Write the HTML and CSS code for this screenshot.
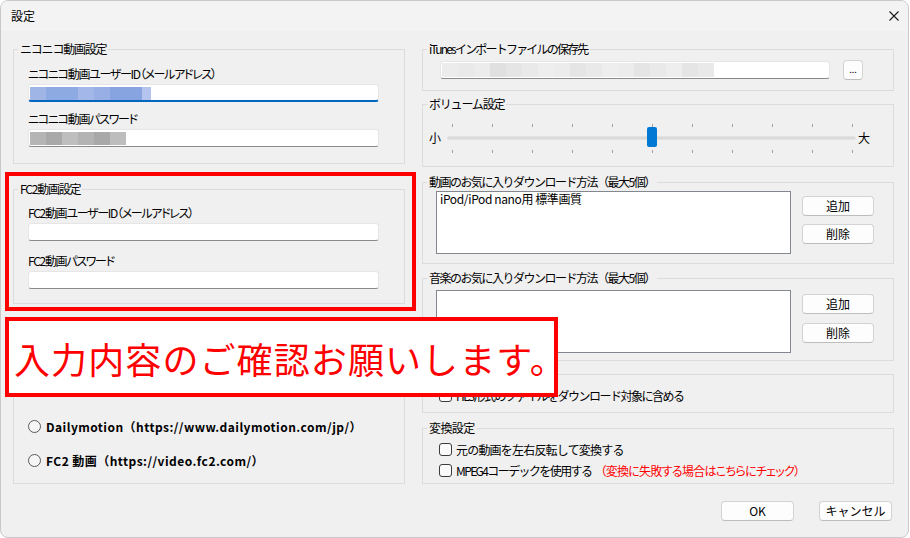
FILE: index.html
```html
<!DOCTYPE html>
<html lang="ja">
<head>
<meta charset="utf-8">
<title>設定</title>
<link rel="stylesheet" href="styles.css">
</head>
<body>
<div class="window">
  <div class="titlebar">
    <span class="title">設定</span>
    <svg class="close" viewBox="0 0 10 10" width="10" height="10"><path d="M0.5 0.5 L9.5 9.5 M9.5 0.5 L0.5 9.5" stroke="#1a1a1a" stroke-width="1.1" fill="none"/></svg>
  </div>
  <div class="content">
    <div class="columns">
      <div class="col">
        <fieldset class="group g-nico">
          <legend>ニコニコ動画設定</legend>
          <div class="gbody">
            <div class="label">ニコニコ動画ユーザーID（メールアドレス）</div>
            <div class="input focused">
              <span class="blur b-blue"><i class="w16 c1"></i><i class="w32 c2"></i><i class="w16 c3"></i><i class="w16 c4"></i><i class="w32 c5"></i><i class="w9 c6"></i></span>
            </div>
            <div class="label">ニコニコ動画パスワード</div>
            <div class="input">
              <span class="blur b-gray"><i class="w16 g1"></i><i class="w16 g2"></i><i class="w16 g3"></i><i class="w16 g4"></i><i class="w16 g5"></i><i class="w16 g6"></i></span>
            </div>
          </div>
        </fieldset>
        <div class="redframe">
          <fieldset class="group g-fc2">
            <legend>FC2動画設定</legend>
            <div class="gbody">
              <div class="label l-first">FC2動画ユーザーID（メールアドレス）</div>
              <div class="input"></div>
              <div class="label l-second">FC2動画パスワード</div>
              <div class="input"></div>
            </div>
          </fieldset>
        </div>
        <div class="box g-site">
          <div class="radio"><span class="circle"></span><span class="rtext">Dailymotion（https://www.dailymotion.com/jp/）</span></div>
          <div class="radio r2"><span class="circle"></span><span class="rtext">FC2 動画（https://video.fc2.com/）</span></div>
        </div>
      </div>

      <div class="col">
        <fieldset class="group wide g-itunes">
          <legend>iTunesインポートファイルの保存先</legend>
          <div class="pathrow">
            <div class="input path">
              <span class="blur b-path"><i class="w16 p1"></i><i class="w16 p2"></i><i class="w16 p1"></i><i class="w16 p3"></i><i class="w16 p4"></i><i class="w16 p2"></i><i class="w16 p5"></i><i class="w16 p1"></i><i class="w16 p4"></i><i class="w16 p2"></i><i class="w16 p5"></i><i class="w16 p1"></i><i class="w16 p4"></i><i class="w16 p2"></i><i class="w16 p5"></i><i class="w16 p4"></i><i class="w16 p2"></i></span>
            </div>
            <div class="btn small">...</div>
          </div>
        </fieldset>

        <fieldset class="group wide g-vol">
          <legend>ボリューム設定</legend>
          <div class="sliderrow">
            <span class="slabel">小</span>
            <div class="slider">
              <div class="ticks"><i></i><i></i><i></i><i></i><i></i><i></i><i></i><i></i><i></i><i></i><i></i></div>
              <div class="track"></div>
              <div class="ticks bottom"><i></i><i></i><i></i><i></i><i></i><i></i><i></i><i></i><i></i><i></i><i></i></div>
              <div class="thumb"></div>
            </div>
            <span class="slabel big">大</span>
          </div>
        </fieldset>

        <fieldset class="group wide g-vfav">
          <legend>動画のお気に入りダウンロード方法（最大5個）</legend>
          <div class="listrow">
            <div class="listbox"><div class="item">iPod/iPod nano用 標準画質</div></div>
            <div class="btncol">
              <div class="btn">追加</div>
              <div class="btn">削除</div>
            </div>
          </div>
        </fieldset>

        <fieldset class="group wide g-mfav">
          <legend>音楽のお気に入りダウンロード方法（最大5個）</legend>
          <div class="listrow">
            <div class="listbox"></div>
            <div class="btncol m">
              <div class="btn">追加</div>
              <div class="btn">削除</div>
            </div>
          </div>
        </fieldset>

        <div class="box wide g-dl">
          <div class="check"><span class="cbox"></span><span class="dltext">HLS形式のファイルをダウンロード対象に含める</span></div>
        </div>

        <fieldset class="group wide g-conv">
          <legend>変換設定</legend>
          <div class="check c-first"><span class="cbox"></span><span>元の動画を左右反転して変換する</span></div>
          <div class="check c-second"><span class="cbox"></span><span class="mpeg">MPEG4コーデックを使用する</span><span class="note">（変換に失敗する場合はこちらにチェック）</span></div>
        </fieldset>
      </div>
    </div>

    <div class="footer">
      <div class="btn ok">OK</div>
      <div class="btn ok">キャンセル</div>
    </div>
  </div>

  <div class="callout">入力内容のご確認お願いします。</div>
</div>
</body>
</html>
```

FILE: styles.css
```css
body {
  margin: 0;
  font-family: "Noto Sans CJK JP", "Noto Sans", sans-serif;
  font-size: 12px;
  color: #000;
  background: #ffffff;
}

.window {
  position: relative;
  width: 909px;
  height: 538px;
  box-sizing: border-box;
  border: 1px solid #c9c9c9;
  border-radius: 8px;
  background: #f0f0f0;
  overflow: hidden;
  letter-spacing: -1px;
}

.titlebar {
  height: 30px;
  background: #f3f3f3;
  display: flex;
  align-items: center;
  justify-content: space-between;
  padding: 0 9px 0 10px;
  letter-spacing: 0;
}

.title {
  line-height: 16px;
}

.close {
  display: block;
}

.content {
  padding: 0 14px 0 12px;
}

.columns {
  display: grid;
  grid-template-columns: 392px 472px;
  column-gap: 17px;
}

.col {
  display: flex;
  flex-direction: column;
  align-items: flex-start;
}

.group {
  margin: 0;
  padding: 0;
  border: 1px solid #dcdcdc;
  min-width: 0;
  width: 392px;
  box-sizing: border-box;
}

.box {
  border: 1px solid #dcdcdc;
  width: 392px;
  box-sizing: border-box;
}

.wide {
  width: 472px;
}

legend {
  padding: 0 2px;
  margin-left: 4px;
  line-height: 16px;
  font-size: 12px;
  letter-spacing: -1.2px;
}

.g-itunes legend {
  letter-spacing: -1.8px;
}

.g-vfav legend,
.g-mfav legend {
  letter-spacing: -1.5px;
}

.g-conv legend {
  letter-spacing: -0.6px;
}

.gbody {
  padding-left: 14px;
}

.label {
  line-height: 16px;
  margin-top: 9px;
  letter-spacing: -1.3px;
  font-feature-settings: "palt";
}

.input {
  width: 351px;
  height: 18px;
  box-sizing: border-box;
  background: #ffffff;
  border: 1px solid #e6e6e6;
  border-bottom: 1px solid #8a8a8a;
  border-radius: 3px;
  margin-top: 2px;
  padding: 2px 1px 0 1px;
}

.input.focused {
  border-bottom: 2px solid #0067c0;
}

.blur {
  display: flex;
  height: 13px;
}

.blur i {
  display: block;
  height: 100%;
}

.w16 { width: 16px; }
.w32 { width: 32px; }
.w9 { width: 9px; }

.c1 { background: #9fb5e6; }
.c2 { background: #8eaae3; }
.c3 { background: #a3b8e8; }
.c4 { background: #97afe4; }
.c5 { background: #87a4e1; }
.c6 { background: #b4c4ee; }

.g1 { background: #b5b5b5; }
.g2 { background: #a9a9a9; }
.g3 { background: #bebebe; }
.g4 { background: #b3b3b3; }
.g5 { background: #a8a8a8; }
.g6 { background: #bdbdbd; }

.p1 { background: #ececec; }
.p2 { background: #e9e9e9; }
.p3 { background: #e0e0e0; }
.p4 { background: #e5e5e5; }
.p5 { background: #eeeeee; }

.g-nico {
  margin-top: 10px;
}

.g-nico .gbody {
  padding-bottom: 16px;
}

.redframe {
  margin: 8px 0 0 -8px;
  width: 411px;
  box-sizing: border-box;
  border: 4px solid #ff0000;
  padding: 5px 0 3px 4px;
}

.g-fc2 .gbody {
  padding-bottom: 14px;
}

.g-fc2 .l-first {
  margin-top: 8px;
}

.g-fc2 .l-second {
  margin-top: 12px;
}

.g-site {
  margin-top: 11px;
  padding: 93px 0 13px 14px;
}

.radio {
  display: flex;
  align-items: center;
  height: 20px;
}

.radio.r2 {
  margin-top: 14px;
}

.circle {
  width: 13px;
  height: 13px;
  box-sizing: border-box;
  border: 1px solid #5a5a5a;
  border-radius: 50%;
  background: #f5f5f5;
  margin-right: 5px;
}

.rtext {
  font-size: 12px;
  font-weight: 600;
  letter-spacing: 0.45px;
}

/* right column */
.g-itunes {
  margin-top: 10px;
}

.pathrow {
  display: flex;
  align-items: center;
  height: 20px;
  margin-top: 3px;
  padding: 0 0 10px 17px;
}

.input.path {
  width: 390px;
  margin-top: 0;
  padding: 1px 1px 0 1px;
}

.b-path {
  height: 14px;
}

.btn {
  height: 20px;
  width: 72px;
  box-sizing: border-box;
  background: #fdfdfd;
  border: 1px solid #d3d3d3;
  border-bottom-color: #bdbdbd;
  border-radius: 4px;
  display: flex;
  align-items: center;
  justify-content: center;
  font-size: 12px;
  line-height: 16px;
  letter-spacing: 0;
}

.btn.small {
  width: 20px;
  margin-left: 13px;
  font-size: 9px;
}

.g-vol {
  margin-top: 5px;
}

.sliderrow {
  display: flex;
  align-items: center;
  margin-top: 10px;
  padding: 0 0 12px 6px;
  letter-spacing: 0;
}

.slabel {
  width: 12px;
  line-height: 16px;
}

.slabel.big {
  margin-left: 2px;
}

.slider {
  position: relative;
  width: 409px;
  height: 32px;
  margin-left: 6px;
  padding-top: 2px;
  box-sizing: border-box;
}

.ticks {
  display: flex;
  justify-content: space-between;
  padding: 0 3px 0 5px;
  height: 3px;
}

.ticks i {
  display: block;
  width: 1px;
  height: 3px;
  background: #a0a0a0;
}

.ticks.bottom {
  margin-top: 10px;
}

.track {
  margin-top: 9px;
  height: 4px;
  box-sizing: border-box;
  background: #dadada;
  border: 1px solid #e2e2e2;
  border-radius: 2px;
}

.thumb {
  position: absolute;
  left: 200px;
  top: 5px;
  width: 10px;
  height: 20px;
  background: #0078d4;
  border-radius: 2px;
}

.g-vfav {
  margin-top: 7px;
}

.listrow {
  display: flex;
  align-items: flex-start;
  padding-left: 13px;
}

.g-vfav .listrow {
  margin-top: 1px;
  padding-bottom: 9px;
}

.listbox {
  width: 355px;
  height: 63px;
  box-sizing: border-box;
  border: 1px solid #838790;
  background: #ffffff;
  padding: 0 3px;
}

.item {
  line-height: 13px;
  letter-spacing: -0.4px;
}

.btncol {
  display: flex;
  flex-direction: column;
  margin-left: 11px;
  padding-top: 5px;
  gap: 8px;
}

.btncol.m {
  padding-top: 4px;
  gap: 9px;
}

.g-mfav {
  margin-top: 6px;
}

.g-mfav .listrow {
  margin-top: 4px;
  padding-bottom: 7px;
}

.g-dl {
  margin-top: 13px;
  padding: 11px 0 8px 0;
}

.dltext {
  letter-spacing: -1.5px;
}

.check {
  display: flex;
  align-items: center;
  height: 18px;
  padding-left: 16px;
}

.cbox {
  width: 13px;
  height: 13px;
  box-sizing: border-box;
  border: 1px solid #3c3c3c;
  border-radius: 3px;
  background: #fbfbfb;
  margin-right: 4px;
}

.g-conv {
  margin-top: 7px;
  padding-bottom: 4px;
}

.check.c-first {
  margin-top: 4px;
  letter-spacing: -0.8px;
}

.check.c-second {
  margin-top: 3px;
}

.mpeg {
  letter-spacing: -1.6px;
}

.note {
  color: #ff0000;
  margin-left: 9px;
  letter-spacing: -0.7px;
  font-feature-settings: "palt";
}

.footer {
  display: flex;
  justify-content: flex-end;
  gap: 25px;
  margin-top: 17px;
  padding-right: 2px;
}

.btn.ok {
  width: 73px;
}

.callout {
  position: absolute;
  left: 4px;
  top: 316px;
  width: 553px;
  height: 80px;
  box-sizing: border-box;
  border: 4px solid #ff0000;
  background: #ffffff;
  color: #ff0000;
  font-size: 36px;
  line-height: 40px;
  letter-spacing: 1.1px;
  padding: 17px 0 0 5px;
  white-space: nowrap;
}
```
